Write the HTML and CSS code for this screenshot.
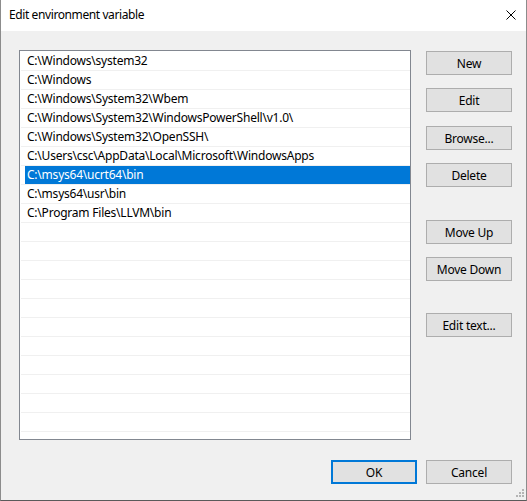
FILE: index.html
```html
<!DOCTYPE html>
<html lang="en">
<head>
  <meta charset="UTF-8" />
  <title>Edit environment variable</title>
  <link rel="stylesheet" href="styles.css">
</head>
<body>
  <div class="dialog">
    <div class="titlebar">
      <span class="title">Edit environment variable</span>
      <svg class="close" width="10" height="10" viewBox="0 0 10 10">
        <path d="M0.5 0.5 L9.5 9.5 M9.5 0.5 L0.5 9.5" stroke="#000" stroke-width="1" fill="none"/>
      </svg>
    </div>

    <div class="main">
      <div class="list" id="pathList"></div>

      <div class="side">
        <button class="btn">New</button>
        <button class="btn">Edit</button>
        <button class="btn browse">Browse...</button>
        <button class="btn">Delete</button>
        <button class="btn move-up">Move Up</button>
        <button class="btn">Move Down</button>
        <button class="btn edit-text">Edit text...</button>
      </div>
    </div>

    <div class="footer">
      <button class="btn default">OK</button>
      <button class="btn">Cancel</button>
    </div>

    <svg class="grip" width="8" height="8" viewBox="0 0 8 8">
      <rect x="6" y="0" width="2" height="2" fill="#b4b4b4"/>
      <rect x="3" y="3" width="2" height="2" fill="#b4b4b4"/>
      <rect x="6" y="3" width="2" height="2" fill="#b4b4b4"/>
      <rect x="0" y="6" width="2" height="2" fill="#b4b4b4"/>
      <rect x="3" y="6" width="2" height="2" fill="#b4b4b4"/>
      <rect x="6" y="6" width="2" height="2" fill="#b4b4b4"/>
    </svg>
  </div>

  <script>
    const paths = [
      "C:\\Windows\\system32",
      "C:\\Windows",
      "C:\\Windows\\System32\\Wbem",
      "C:\\Windows\\System32\\WindowsPowerShell\\v1.0\\",
      "C:\\Windows\\System32\\OpenSSH\\",
      "C:\\Users\\csc\\AppData\\Local\\Microsoft\\WindowsApps",
      "C:\\msys64\\ucrt64\\bin",
      "C:\\msys64\\usr\\bin",
      "C:\\Program Files\\LLVM\\bin"
    ];
    const selected = 6;
    const totalRows = 20;
    const list = document.getElementById("pathList");

    for (let i = 0; i < totalRows; i++) {
      const row = document.createElement("div");
      row.className = "row";
      const cell = document.createElement("span");
      cell.className = "cell" + (i === selected ? " selected" : "");
      cell.textContent = paths[i] || "";
      row.appendChild(cell);
      list.appendChild(row);
    }
  </script>
</body>
</html>
```

FILE: styles.css
```css
* {
    box-sizing: border-box;
}
body {
    margin: 0;
    font-family: "Noto Sans", "Open Sans", sans-serif;
    font-size: 12px;
    letter-spacing: -0.22px;
    color: #000;
}
.dialog {
    position: relative;
    width: 527px;
    height: 501px;
    background-color: #f0f0f0;
    border-left: 1px solid #8c8c8c;
    border-right: 1px solid #8c8c8c;
    border-bottom: 1px solid #5a5a5a;
    display: flex;
    flex-direction: column;
}
.titlebar {
    height: 31px;
    background-color: #fff;
    display: flex;
    align-items: center;
    justify-content: space-between;
    padding: 0 10px 2px 8px;
}
.title {
    color: #000;
    letter-spacing: -0.4px;
}
.close {
    display: block;
}
.main {
    display: flex;
    padding: 19px 0 0 18px;
}
.list {
    width: 392px;
    height: 390px;
    background-color: #fff;
    border: 1px solid #828790;
    padding: 1px 0 0 1px;
    overflow: hidden;
}
.row {
    height: 19px;
    border-bottom: 1px solid #f0f0f0;
    display: flex;
}
.cell {
    flex: 1;
    height: 18px;
    line-height: 18px;
    margin-left: 4px;
    padding-left: 2px;
    white-space: nowrap;
    overflow: hidden;
}
.cell.selected {
    background-color: #0078d7;
    color: #fff;
}
.side {
    display: flex;
    flex-direction: column;
    margin-left: 15px;
    padding-top: 1px;
    gap: 13px;
}
.btn {
    width: 86px;
    height: 24px;
    padding: 0;
    margin: 0;
    font-family: inherit;
    font-size: 12px;
    letter-spacing: -0.22px;
    color: #000;
    background-color: #e1e1e1;
    border: 1px solid #adadad;
}
.side .browse {
    margin-top: 1px;
}
.side .move-up {
    margin-top: 20px;
}
.side .edit-text {
    margin-top: 19px;
}
.footer {
    display: flex;
    justify-content: flex-end;
    gap: 9px;
    padding: 20px 14px 0 0;
}
.btn.default {
    border: 2px solid #0078d7;
}
.grip {
    position: absolute;
    right: 2px;
    bottom: 3px;
}
```
